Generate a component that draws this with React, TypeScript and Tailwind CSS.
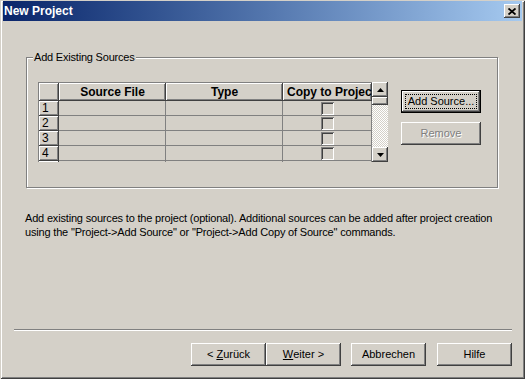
import React from 'react';

const raised =
  'shadow-[inset_-1px_-1px_#404040,inset_1px_1px_#ffffff,inset_-2px_-2px_#808080,inset_2px_2px_#d4d0c8]';

const Arrow: React.FC<{ down?: boolean }> = ({ down }) => (
  <svg width="7" height="4" viewBox="0 0 7 4" className="block">
    {down ? <path d="M0 0h7L3.5 4z" fill="#000" /> : <path d="M3.5 0L7 4H0z" fill="#000" />}
  </svg>
);

const WizardButton: React.FC<{ children: React.ReactNode }> = ({ children }) => (
  <button className={`w-[75px] h-[23px] bg-[#d4d0c8] text-[11px] text-black flex items-center justify-center ${raised}`}>
    {children}
  </button>
);

const rows = ['1', '2', '3', '4', ''];

const App: React.FC = () => {
  return (
    <div className="w-[525px] h-[379px] bg-[#d4d0c8] flex flex-col font-['Liberation_Sans',Arial,sans-serif] text-black shadow-[inset_1px_1px_#d4d0c8,inset_-1px_-1px_#404040,inset_2px_2px_#ffffff,inset_-2px_-2px_#808080] overflow-hidden">
      {/* title bar */}
      <div className="mt-[1px] mx-[3px] h-[20px] flex items-center justify-between bg-linear-to-r from-[#0a246a] to-[#a6caf0]">
        <span className="pl-[1px] text-[12px] font-bold text-white leading-none">New Project</span>
        <div className={`mr-[2px] w-[16px] h-[14px] bg-[#d4d0c8] flex items-center justify-center ${raised}`}>
          <svg width="8" height="7" viewBox="0 0 8 7" className="block">
            <path d="M0.5 0.5L7.5 6.5M7.5 0.5L0.5 6.5" stroke="#000" strokeWidth="1.8" />
          </svg>
        </div>
      </div>

      {/* group box */}
      <div className="relative mt-[36px] ml-[26px] w-[472px] h-[131px] border border-[#808080] shadow-[inset_1px_1px_#ffffff,1px_1px_#ffffff]">
        <span className="absolute -top-[7px] left-[6px] px-[1px] bg-[#d4d0c8] text-[11px] leading-[13px] tracking-[-0.2px]">
          Add Existing Sources
        </span>
        <div className="flex pt-[24px] pl-[11px]">
          {/* grid */}
          <div className="flex w-[350px] h-[80px]">
            <div className="w-[334px] h-[80px] overflow-hidden border-l border-t border-[#808080] flex flex-col">
              <div className="flex h-[18px] shrink-0">
                <div className={`w-[20px] h-full bg-[#d4d0c8] ${raised}`} />
                <div className={`w-[107px] h-full flex items-center justify-center text-[12px] font-bold ${raised}`}>
                  Source File
                </div>
                <div className={`w-[117px] h-full flex items-center justify-center text-[12px] font-bold ${raised}`}>
                  Type
                </div>
                <div className={`w-[89px] h-full flex items-center pl-[4px] overflow-hidden whitespace-nowrap text-[12px] font-bold ${raised}`}>
                  Copy to Projec
                </div>
              </div>
              {rows.map((r, i) => (
                <div key={i} className="flex h-[15px] shrink-0">
                  <div className={`w-[20px] h-full pl-[3px] text-[12px] leading-[15px] ${raised}`}>{r}</div>
                  <div className="w-[107px] h-full border-r border-b border-[#808080]" />
                  <div className="w-[117px] h-full border-r border-b border-[#808080]" />
                  <div className="w-[89px] h-full border-r border-b border-[#808080] flex justify-center pt-[1px]">
                    <div className="w-[13px] h-[13px] shadow-[inset_1px_1px_#808080,inset_-1px_-1px_#ffffff,inset_2px_2px_#404040,inset_-2px_-2px_#d4d0c8]" />
                  </div>
                </div>
              ))}
            </div>
            {/* scrollbar */}
            <div className="w-[16px] h-[80px] flex flex-col">
              <div className={`h-[15px] flex items-center justify-center ${raised}`}>
                <Arrow />
              </div>
              <div className={`h-[8px] ${raised}`} />
              <div className="flex-1 bg-[repeating-conic-gradient(#d4d0c8_0%_25%,#ffffff_0%_50%)] bg-[length:2px_2px]" />
              <div className={`h-[15px] flex items-center justify-center ${raised}`}>
                <Arrow down />
              </div>
            </div>
          </div>

          {/* side buttons */}
          <div className="ml-[13px] pt-[8px] flex flex-col gap-[9px]">
            <div className="w-[80px] h-[23px] border border-black">
              <div className={`w-full h-full p-[3px] ${raised}`}>
                <div className="w-full h-full border border-dotted border-black flex items-center justify-center text-[11px]">
                  Add Source...
                </div>
              </div>
            </div>
            <div className={`w-[80px] h-[23px] flex items-center justify-center text-[11px] text-[#808080] [text-shadow:1px_1px_0_#ffffff] ${raised}`}>
              Remove
            </div>
          </div>
        </div>
      </div>

      {/* description */}
      <p className="mt-[23px] ml-[25px] text-[11px] leading-[14px] tracking-[-0.18px] whitespace-nowrap">
        Add existing sources to the project (optional). Additional sources can be added after project creation
        <br />
        using the "Project-&gt;Add Source" or "Project-&gt;Add Copy of Source" commands.
      </p>

      {/* separator */}
      <div className="mt-auto ml-[14px] w-[498px] h-[2px] border-t border-b border-t-[#808080] border-b-white" />

      {/* wizard buttons */}
      <div className="mt-[12px] mb-[13px] ml-[191px] flex">
        <WizardButton>
          &lt; <span className="underline ml-[3px]">Z</span>urück
        </WizardButton>
        <WizardButton>
          <span className="underline">W</span>eiter &gt;
        </WizardButton>
        <div className="ml-[10px]">
          <WizardButton>Abbrechen</WizardButton>
        </div>
        <div className="ml-[11px]">
          <WizardButton>Hilfe</WizardButton>
        </div>
      </div>
    </div>
  );
};

export default App;
